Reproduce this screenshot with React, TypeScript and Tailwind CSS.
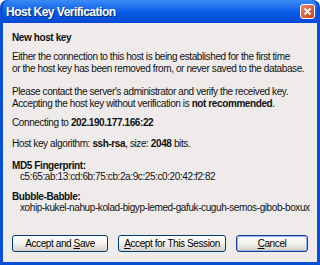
import React from 'react'

function XpButton({ children, focused = false, className = '' }: { children: React.ReactNode; focused?: boolean; className?: string }) {
  return (
    <button
      className={`h-[17px] rounded-[3px] border ${focused ? 'border-[#1c3f94] shadow-[inset_0_0_0_1px_#98b4ea]' : 'border-[#003c74]'} bg-gradient-to-b from-[#fefefe] via-[#f2f1ec] to-[#d6d0c5] leading-none text-black ${className}`}
    >
      {children}
    </button>
  )
}

export default function App() {
  return (
    <div className="w-[320px] h-[265px] overflow-hidden whitespace-nowrap font-['Liberation_Sans',sans-serif] text-[10px] tracking-[-0.4px] text-[#111]">
      <div className="flex h-full flex-col rounded-t-[7px] bg-[#0a4fd8] px-[3px] pb-[3px]">
        {/* title bar */}
        <div className="flex h-[23px] items-center justify-between rounded-t-[7px] bg-gradient-to-b from-[#3b8cf6] via-[#0a5de6] to-[#0648d4] pl-[3px] pr-[2px]">
          <span className="text-[12px] font-bold tracking-[-0.5px] text-white [text-shadow:1px_1px_0_#0a2a80]">Host Key Verification</span>
          <div className="flex h-[15px] w-[15px] items-center justify-center rounded-[3px] border border-white bg-gradient-to-br from-[#e8866a] to-[#c8401c]">
            <svg width="9" height="9" viewBox="0 0 9 9">
              <path d="M1.5 1.5 L7.5 7.5 M7.5 1.5 L1.5 7.5" stroke="white" strokeWidth="1.8" />
            </svg>
          </div>
        </div>

        {/* client area */}
        <div className="flex flex-1 flex-col bg-[#efebea] px-[9px] pt-[9px]">
          <div className="font-bold leading-[12px]">New host key</div>

          <div className="mt-[7px] leading-[12px]">
            <p>Either the connection to this host is being established for the first time</p>
            <p>or the host key has been removed from, or never saved to the database.</p>
          </div>

          <div className="mt-[11px] leading-[12px]">
            <p>Please contact the server's administrator and verify the received key.</p>
            <p>
              Accepting the host key without verification is <b>not recommended</b>.
            </p>
          </div>

          <p className="mt-[7px] leading-[12px]">
            Connecting to <b>202.190.177.166:22</b>
          </p>

          <p className="mt-[9px] leading-[12px]">
            Host key algorithm: <b>ssh-rsa</b>, size: <b>2048</b> bits.
          </p>

          <div className="mt-[10px] leading-[11px]">
            <p className="font-bold">MD5 Fingerprint:</p>
            <p className="pl-[8px]">c5:65:ab:13:cd:6b:75:cb:2a:9c:25:c0:20:42:f2:82</p>
          </div>

          <div className="mt-[9px] leading-[11px]">
            <p className="font-bold">Bubble-Babble:</p>
            <p className="pl-[8px]">xohip-kukel-nahup-kolad-bigyp-lemed-gafuk-cuguh-semos-gibob-boxux</p>
          </div>

          <div className="mt-auto mb-[10px] flex items-center gap-[10px]">
            <XpButton className="w-[96px]">
              Accept and <u>S</u>ave
            </XpButton>
            <XpButton className="w-[108px]">
              <u>A</u>ccept for This Session
            </XpButton>
            <XpButton focused className="w-[72px]">
              <u>C</u>ancel
            </XpButton>
          </div>
        </div>
      </div>
    </div>
  )
}
